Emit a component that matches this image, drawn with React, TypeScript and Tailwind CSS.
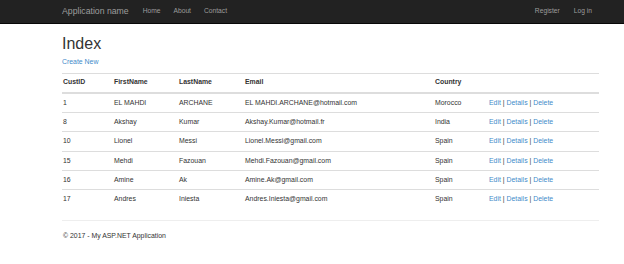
import React from "react";

const rows = [
  ["1", "EL MAHDI", "ARCHANE", "EL MAHDI.ARCHANE@hotmail.com", "Morocco", "h-[18px]"],
  ["8", "Akshay", "Kumar", "Akshay.Kumar@hotmail.fr", "India", "h-[19px] border-t"],
  ["10", "Lionel", "Messi", "Lionel.Messi@gmail.com", "Spain", "h-[20px] border-t"],
  ["15", "Mehdi", "Fazouan", "Mehdi.Fazouan@gmail.com", "Spain", "h-[19px] border-t"],
  ["16", "Amine", "Ak", "Amine.Ak@gmail.com", "Spain", "h-[19px] border-t"],
  ["17", "Andres", "Iniesta", "Andres.Iniesta@gmail.com", "Spain", "h-[20px] border-t"],
];

const cols = "grid grid-cols-[51px_65px_66px_190px_54px_1fr] items-center";

export default function App() {
  return (
    <div
      className="w-[624px] h-[264px] bg-white text-[#333] text-[6.9px] overflow-hidden"
      style={{ fontFamily: '"Liberation Sans", Arial, sans-serif' }}
    >
      <div className="h-[24px] bg-[#222] border-b border-[#080808] flex items-center pl-[62px] pr-[32px]">
        <span className="text-[8.7px] text-[#9d9d9d] mr-[14px]">Application name</span>
        <nav className="flex gap-[13px] text-[6.7px] text-[#9d9d9d]">
          <span>Home</span>
          <span>About</span>
          <span>Contact</span>
        </nav>
        <nav className="ml-auto flex gap-[14px] text-[6.7px] text-[#9d9d9d]">
          <span>Register</span>
          <span>Log in</span>
        </nav>
      </div>
      <div className="ml-[62px] w-[537px]">
        <h1 className="mt-[10px] text-[16px] leading-[20px] font-normal">Index</h1>
        <div className="mt-[2px] leading-[12px] text-[#428bca]">Create New</div>
        <div className="mt-[5px]">
          <div className={`${cols} h-[21px] border-t border-b-2 border-[#ddd] font-bold pl-[1px] pb-[1px]`}>
            <span>CustID</span>
            <span>FirstName</span>
            <span>LastName</span>
            <span>Email</span>
            <span>Country</span>
            <span></span>
          </div>
          {rows.map((r) => (
            <div key={r[0]} className={`${cols} pl-[1px] border-[#ddd] ${r[5]}`}>
              <span>{r[0]}</span>
              <span>{r[1]}</span>
              <span>{r[2]}</span>
              <span>{r[3]}</span>
              <span>{r[4]}</span>
              <span>
                <span className="text-[#428bca]">Edit</span> |{" "}
                <span className="text-[#428bca]">Details</span> |{" "}
                <span className="text-[#428bca]">Delete</span>
              </span>
            </div>
          ))}
        </div>
        <div className="mt-[11px] border-t border-[#eee]" />
        <div className="mt-[9px] leading-[12px] pl-[1px]">© 2017 - My ASP.NET Application</div>
      </div>
    </div>
  );
}
